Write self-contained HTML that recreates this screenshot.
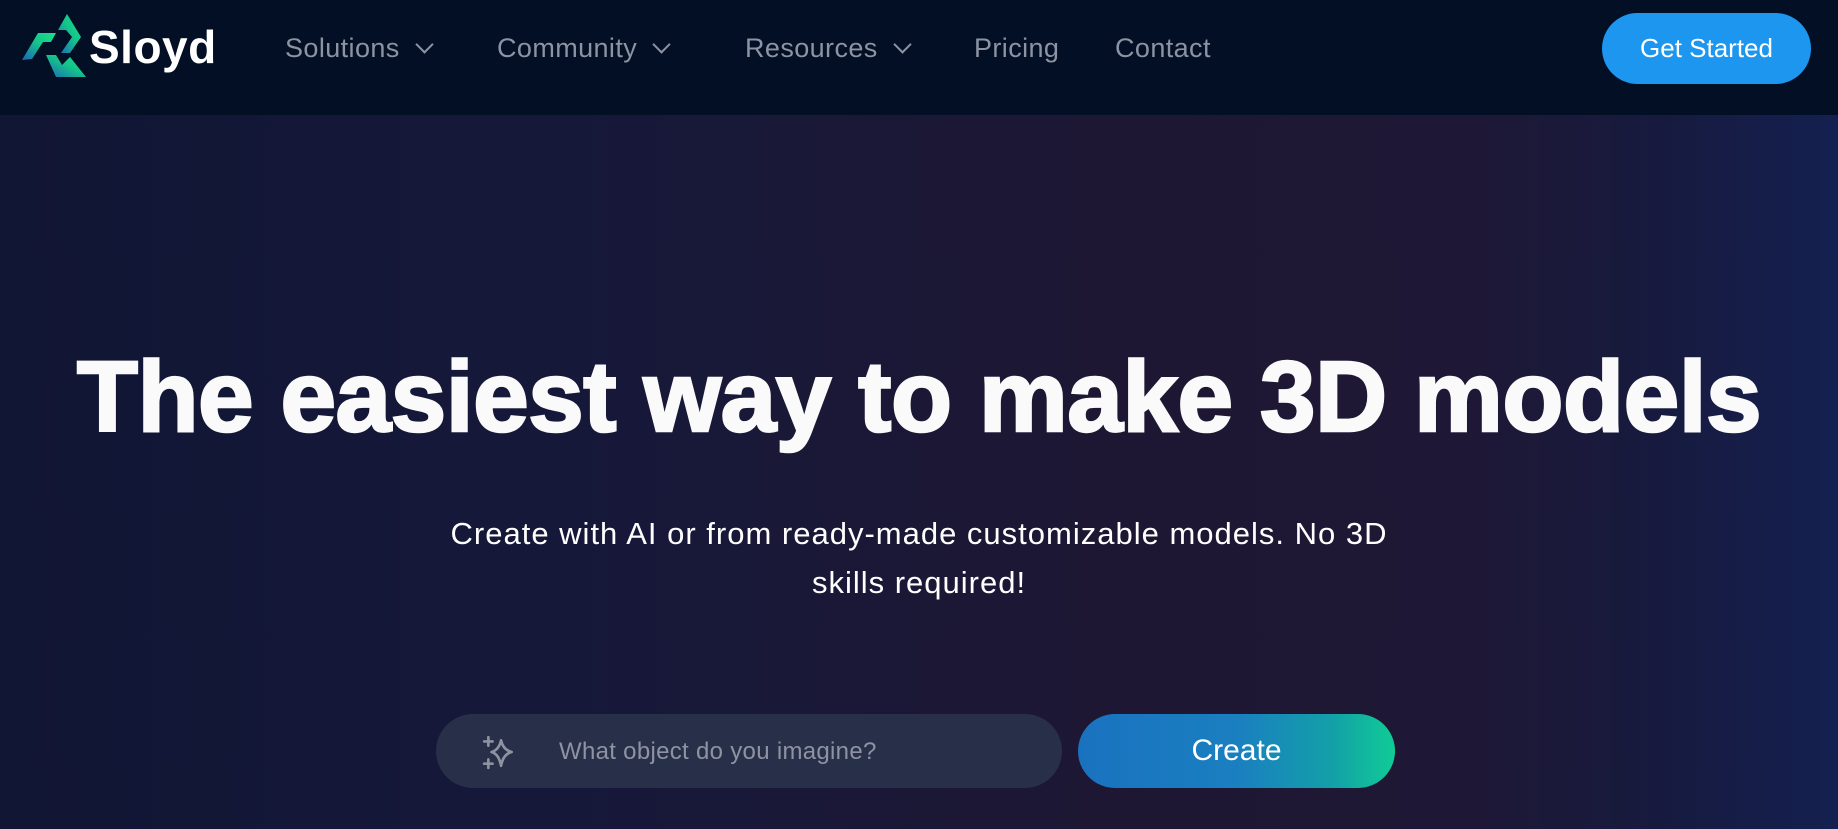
<!DOCTYPE html>
<html><head><meta charset="utf-8"><style>
*{margin:0;padding:0;box-sizing:border-box}
body{width:1838px;height:829px;overflow:hidden;font-family:"Liberation Sans",sans-serif;background:linear-gradient(90deg,#111634 0%,#16183a 30%,#1d1733 60%,#1e1836 80%,#171a3e 90%,#142050 100%);position:relative}
.nav{position:absolute;left:0;top:0;width:1838px;height:115px;background:#020f24}
.logo{position:absolute;left:0;top:0}
.brand{position:absolute;left:89px;top:20px;color:#fff;font-weight:bold;font-size:46px;letter-spacing:0.5px}
.item{position:absolute;top:33px;color:#8c93a3;font-size:27px;letter-spacing:0.4px}
.chev{display:inline-block;width:13px;height:13px;border-right:2.5px solid #8c93a3;border-bottom:2.5px solid #8c93a3;transform:rotate(45deg);margin-left:18px;position:relative;top:-6px}
.gs{position:absolute;left:1602px;top:13px;width:209px;height:71px;border-radius:36px;background:#1c96ef;color:#fff;font-size:26px;text-align:center;line-height:71px}
h1{position:absolute;left:0;width:1838px;top:342px;text-align:center;color:#fafafa;font-size:100px;font-weight:900;letter-spacing:-0.5px;line-height:110px;-webkit-text-stroke:2.5px #fafafa}
.sub{position:absolute;left:439px;width:960px;top:509px;text-align:center;color:#fff;font-size:31px;letter-spacing:1px;line-height:49px}
.inp{position:absolute;left:436px;top:714px;width:626px;height:74px;border-radius:37px;background:#283049}
.ph{position:absolute;left:123px;top:24px;color:#8e93a2;font-size:24px;letter-spacing:0.3px}
.cr{position:absolute;left:1078px;top:714px;width:317px;height:74px;border-radius:37px;background:linear-gradient(90deg,#1a72bf 0%,#1a7fc0 50%,#139fa8 80%,#10cc95 100%);color:#fff;font-size:30px;text-align:center;line-height:74px}
</style></head><body>
<div class="nav">
<svg class="logo" width="100" height="90" viewBox="0 0 100 90">
<defs><linearGradient id="g" x1="0" y1="1" x2="1" y2="0"><stop offset="0" stop-color="#1e64b8"/><stop offset="0.55" stop-color="#14c58a"/><stop offset="1" stop-color="#1ee08c"/></linearGradient></defs>
<path d="M22 60 L38 33 L56 33 L51 42 L43 42 L32 59 Z" fill="url(#g)"/>
<path d="M58 30 L67 14 L81 37 L70 53 L61 53 L72 37 L66 30 Z" fill="url(#g)"/>
<path d="M46 55 L56 55 L62 65 L70 57 L86 77 L56 77 Z" fill="url(#g)"/>
</svg>
<div class="brand">Sloyd</div>
<div class="item" style="left:285px">Solutions<span class="chev"></span></div>
<div class="item" style="left:497px">Community<span class="chev"></span></div>
<div class="item" style="left:745px">Resources<span class="chev"></span></div>
<div class="item" style="left:974px">Pricing</div>
<div class="item" style="left:1115px">Contact</div>
<div class="gs">Get Started</div>
</div>
<h1>The easiest way to make 3D models</h1>
<div class="sub">Create with AI or from ready-made customizable models. No 3D skills required!</div>
<div class="inp">
<svg style="position:absolute;left:46px;top:20px" width="36" height="36" viewBox="0 0 34 34" fill="none" stroke="#8e93a2" stroke-width="2.5" stroke-linejoin="round">
<path d="M18 6 Q20 15 28 17 Q20 19 18 30 Q16 19 9 17 Q16 15 18 6Z"/>
<path d="M6 3v8M2 7h8M6 24v8M2 28h8" stroke-linecap="round"/>
</svg>
<div class="ph">What object do you imagine?</div>
</div>
<div class="cr">Create</div>
</body></html>
